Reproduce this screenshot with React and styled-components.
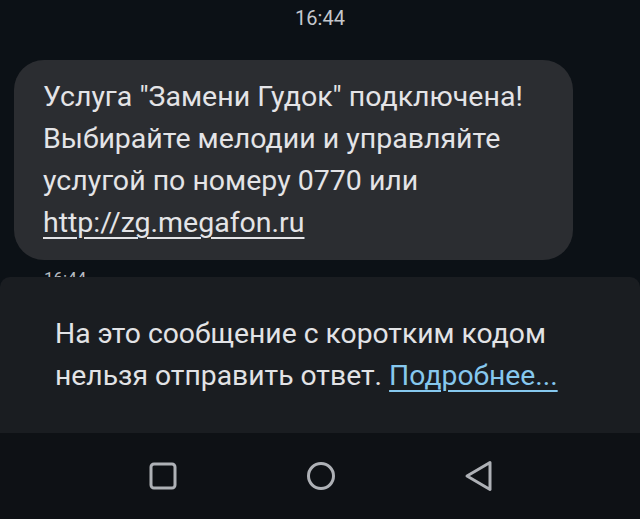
import React from "react";
import styled, { createGlobalStyle } from "styled-components";

const GlobalStyle = createGlobalStyle`
  html, body { margin: 0; padding: 0; background: #0c1116; }
  body { font-family: Roboto, "Noto Sans", "Liberation Sans", sans-serif; }
`;

const Screen = styled.div`
  width: 640px;
  height: 519px;
  display: flex;
  flex-direction: column;
  background: #0c1116;
  overflow: hidden;
`;

const Header = styled.div`
  height: 36px;
  display: flex;
  align-items: center;
  justify-content: center;
  color: #c5c8cd;
  font-size: 20px;
`;

const Thread = styled.div`
  flex: 1;
  overflow: hidden;
  padding: 24px 0 0 14px;
  display: flex;
  flex-direction: column;
  align-items: flex-start;
`;

const Bubble = styled.div`
  width: 559px;
  box-sizing: border-box;
  padding: 16px 20px 16px 29px;
  background: #2b2d31;
  border-radius: 30px;
  color: #e4e4e7;
  font-size: 28.5px;
  line-height: 42px;
`;

const Line = styled.div`
  white-space: nowrap;
`;

const BubbleLink = styled.span`
  text-decoration: underline;
  text-decoration-thickness: 2px;
  text-underline-offset: 5px;
`;

const Stamp = styled.div`
  margin: 8px 0 0 30px;
  color: #b8bcc2;
  font-size: 17px;
  line-height: 20px;
`;

const Notice = styled.div`
  height: 156px;
  box-sizing: border-box;
  background: #1a1d21;
  border-radius: 10px 10px 0 0;
  padding: 36px 20px 0 55px;
  color: #e2e3e6;
  font-size: 28.3px;
  line-height: 42px;
`;

const NoticeLink = styled.span`
  color: #86c8ee;
  text-decoration: underline;
  text-decoration-thickness: 2px;
  text-underline-offset: 5px;
`;

const NavBar = styled.div`
  height: 86px;
  background: #0e1115;
  display: flex;
  align-items: center;
  justify-content: center;
  gap: 126px;
  padding-left: 2px;
`;

const NavButton = styled.div`
  width: 32px;
  height: 32px;
  display: flex;
  align-items: center;
  justify-content: center;
  color: #aeb1b6;
`;

export default function App() {
  return (
    <>
      <GlobalStyle />
      <Screen>
        <Header>16:44</Header>
        <Thread>
          <Bubble>
            <Line>Услуга "Замени Гудок" подключена!</Line>
            <Line>Выбирайте мелодии и управляйте</Line>
            <Line>услугой по номеру 0770 или</Line>
            <Line>
              <BubbleLink>http://zg.megafon.ru</BubbleLink>
            </Line>
          </Bubble>
          <Stamp>16:44</Stamp>
        </Thread>
        <Notice>
          <Line>На это сообщение с коротким кодом</Line>
          <Line>
            нельзя отправить ответ. <NoticeLink>Подробнее...</NoticeLink>
          </Line>
        </Notice>
        <NavBar>
          <NavButton>
            <svg width="28" height="28" viewBox="0 0 28 28" fill="none">
              <rect x="2" y="2" width="24" height="24" rx="3" stroke="currentColor" strokeWidth="3" />
            </svg>
          </NavButton>
          <NavButton>
            <svg width="30" height="30" viewBox="0 0 30 30" fill="none">
              <circle cx="15" cy="15" r="12.5" stroke="currentColor" strokeWidth="3" />
            </svg>
          </NavButton>
          <NavButton>
            <svg width="30" height="32" viewBox="0 0 30 32" fill="none">
              <path d="M26 2.5 L3 16 L26 29.5 Z" stroke="currentColor" strokeWidth="3" strokeLinejoin="round" />
            </svg>
          </NavButton>
        </NavBar>
      </Screen>
    </>
  );
}
